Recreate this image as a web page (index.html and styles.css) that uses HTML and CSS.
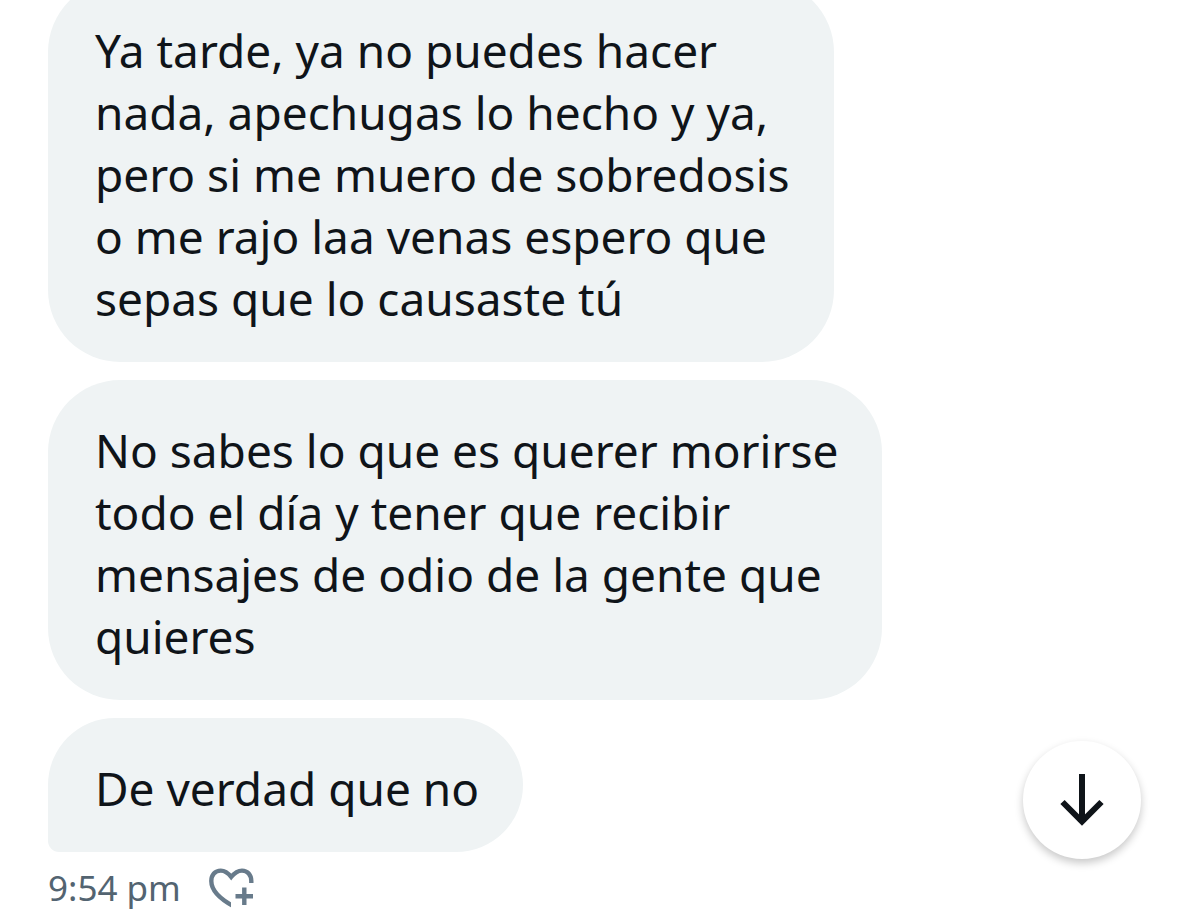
FILE: index.html
```html
<!DOCTYPE html>
<html lang="es">
<head>
<meta charset="utf-8">
<meta name="viewport" content="width=device-width, initial-scale=1">
<title>Mensajes</title>
<link rel="stylesheet" href="styles.css">
</head>
<body>
<main class="chat">
  <div class="message message-first">Ya tarde, ya no puedes hacer<br>nada, apechugas lo hecho y ya,<br>pero si me muero de sobredosis<br>o me rajo laa venas espero que<br>sepas que lo causaste tú</div>
  <div class="message">No sabes lo que es querer morirse<br>todo el día y tener que recibir<br>mensajes de odio de la gente que<br>quieres</div>
  <div class="message message-last">De verdad que no</div>
  <div class="meta">
    <time>9:54 pm</time>
    <button class="react" type="button" aria-label="Reaccionar">
      <svg viewBox="0 0 46 40" width="46" height="40" fill="none" stroke="currentColor" stroke-width="4.4">
        <defs><clipPath id="heart-edge"><path d="M0 0H46V15H22V40H0Z"/></clipPath></defs>
        <path clip-path="url(#heart-edge)" d="M42.300 16V13C42.300 7 38.500 2.600 33 2.600C28 2.600 25 5.500 22.200 9C19.500 5.500 16.500 2.600 11.800 2.600C6 2.600 2.300 7 2.300 13C2.300 23 11 31 25 38.500"/>
        <path d="M35.300 19.500V37M26.500 28.200H44"/>
      </svg>
    </button>
  </div>
</main>
<button class="scroll-down" type="button" aria-label="Ir al final">
  <svg viewBox="0 0 44 52" width="44" height="52" fill="none" stroke="currentColor" stroke-width="6">
    <path d="M22 0V46M2.500 28L22 47.500L41.500 28"/>
  </svg>
</button>
</body>
</html>
```
FILE: styles.css
```css
* { box-sizing: border-box; }
body {
  margin: 0;
  background: #fff;
  color: #0f1419;
  font-family: "Noto Sans", sans-serif;
}
.chat {
  display: flex;
  flex-direction: column;
  align-items: flex-start;
  gap: 18px;
  min-height: 100vh;
  margin-top: -20px;
  padding: 0 48px;
}
.message {
  padding: 39px 44px 33px 47px;
  border-radius: 72px;
  background: #eff3f4;
  font-size: 46px;
  line-height: 62px;
  white-space: nowrap;
}
.message-last { border-bottom-left-radius: 12px; }
.meta {
  display: flex;
  align-items: center;
  gap: 28px;
  margin-top: -2px;
  padding-bottom: 9px;
  color: #536471;
  font-size: 35px;
  line-height: 40px;
}
.react {
  display: flex;
  padding: 0;
  border: 0;
  background: none;
  color: #687b8b;
}
.scroll-down {
  position: fixed;
  right: 59px;
  bottom: 57px;
  display: grid;
  place-items: center;
  width: 118px;
  height: 118px;
  padding: 0;
  border: 0;
  border-radius: 50%;
  background: #fff;
  color: #0f1419;
  box-shadow: 0 4px 8px rgb(0 0 0 / 22%);
}
```
